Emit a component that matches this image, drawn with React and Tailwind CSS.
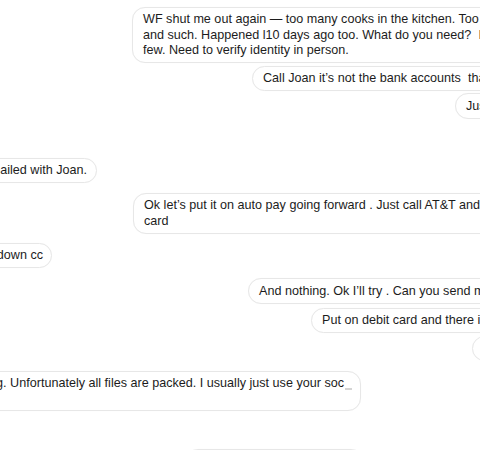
export default function App() {
  const bubble =
    "shrink-0 whitespace-nowrap box-border bg-white border border-[#e7e7e7] rounded-[13px] px-[10px] text-[12.6px] text-[#1c1c1c] shadow-[0_0_1px_rgba(0,0,0,0.04)]";
  return (
    <div
      className="w-[480px] h-[450px] overflow-hidden bg-white flex flex-col"
      style={{ fontFamily: '"Liberation Sans", Arial, sans-serif' }}
    >
      {/* 1 */}
      <div className="flex pl-[132px] mt-[7px]">
        <div className={bubble + " h-[56px] py-[4px] leading-[15.5px]"}>
          <div>WF shut me out again — too many cooks in the kitchen. Too many logins</div>
          <div>and such. Happened l10 days ago too. What do you need?&nbsp; I'll have to go in</div>
          <div>few. Need to verify identity in person.</div>
        </div>
      </div>
      {/* 2 */}
      <div className="flex pl-[252px] mt-[3px]">
        <div className={bubble + " h-[25px] flex items-center"}>
          Call Joan it’s not the bank accounts&nbsp; that need it
        </div>
      </div>
      {/* 3 */}
      <div className="flex pl-[455px] mt-[2px]">
        <div className={bubble + " h-[26px] flex items-center"}>Just call Joan</div>
      </div>
      {/* 4 */}
      <div className="flex justify-end w-[97px] mt-[39px]">
        <div className={bubble + " h-[25px] flex items-center pr-[9px]"}>I emailed with Joan.</div>
      </div>
      {/* 5 */}
      <div className="flex pl-[133px] mt-[10px]">
        <div className={bubble + " h-[41px] py-[4px] leading-[15.5px]"}>
          <div>Ok let’s put it on auto pay going forward . Just call AT&amp;T and put it on debit</div>
          <div>card</div>
        </div>
      </div>
      {/* 6 */}
      <div className="flex justify-end w-[52px] mt-[9px]">
        <div className={bubble + " h-[25px] flex items-center pr-[8px]"}>Will track down cc</div>
      </div>
      {/* 7 */}
      <div className="flex pl-[248px] mt-[10px]">
        <div className={bubble + " h-[26px] flex items-center"}>
          And nothing. Ok I’ll try . Can you send me the number
        </div>
      </div>
      {/* 8 */}
      <div className="flex pl-[311px] mt-[4px]">
        <div className={bubble + " h-[25px] flex items-center"}>
          Put on debit card and there is money
        </div>
      </div>
      {/* 9 */}
      <div className="flex pl-[472px] mt-[3px]">
        <div className={bubble + " h-[25px] flex items-center"}>Ok</div>
      </div>
      {/* 10 */}
      <div className="flex justify-end w-[361px] mt-[10px]">
        <div className={bubble + " h-[40px] py-[4px] leading-[15.5px] pr-[8px]"}>
          <div>
            I’m looking. Unfortunately all files are packed. I usually just use your soc
            <span className="inline-block w-[7px] h-[2px] bg-[#d4d4d4] ml-[1px] align-[-3px]"></span>
          </div>
          <div>sec #</div>
        </div>
      </div>
      {/* 11 */}
      <div className="flex pl-[185px] mt-[38px]">
        <div className={bubble + " h-[30px] flex items-center"}>Thanks I’ll figure it out today</div>
      </div>
    </div>
  );
}
